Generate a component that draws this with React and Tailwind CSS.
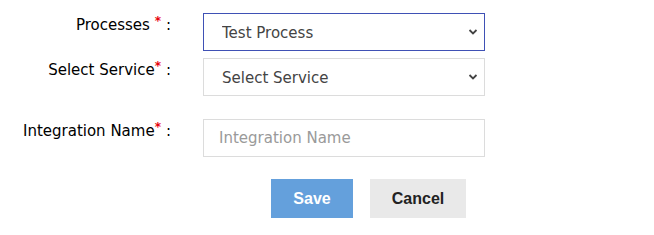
import React from 'react'

const Chevron = () => (
  <svg className="pointer-events-none absolute right-[7px] top-1/2 -translate-y-1/2" width="10" height="7" viewBox="0 0 10 7">
    <path d="M1.5 1.5 L5 5 L8.5 1.5" fill="none" stroke="#444" strokeWidth="1.8" />
  </svg>
)

const Label = ({ text, spaced }) => (
  <div className="w-[171px] shrink-0 text-right text-[15px] leading-[20px] text-black pt-[2px]">
    {text}
    {spaced ? ' ' : ''}
    <span className="text-red-600 align-top text-[12px] leading-[12px] font-bold">*</span>
    <span className="ml-[5px]">:</span>
  </div>
)

const SelectField = ({ value, options, active }) => (
  <div className="relative w-[282px]">
    <select
      defaultValue={value}
      className={`appearance-none w-full h-[38px] bg-white pl-[18px] pr-8 pt-[2px] text-[15px] text-[#444] outline-none ${
        active ? 'border border-[#3f51b5]' : 'border border-[#dcdcdc]'
      }`}
    >
      {options.map((o) => (
        <option key={o}>{o}</option>
      ))}
    </select>
    <Chevron />
  </div>
)

export default function App() {
  return (
    <div className="w-[654px] h-[235px] bg-white font-['DejaVu_Sans',sans-serif]">
      <div className="pt-[13px]">
        <div className="flex gap-[32px]">
          <Label text="Processes" spaced />
          <SelectField value="Test Process" options={['Test Process']} active />
        </div>
        <div className="flex gap-[32px] mt-[7px]">
          <Label text="Select Service" />
          <SelectField value="Select Service" options={['Select Service']} />
        </div>
        <div className="flex gap-[32px] mt-[23px]">
          <Label text="Integration Name" />
          <input
            placeholder="Integration Name"
            className="w-[282px] h-[38px] border border-[#dcdcdc] pl-[15px] text-[15px] text-[#444] placeholder:text-[#9a9a9a] outline-none"
          />
        </div>
        <div className="flex gap-[17px] mt-[22px] pl-[271px] font-['Liberation_Sans',Arial,sans-serif]">
          <button className="w-[82px] h-[39px] bg-[#64a0dc] text-white font-bold text-[16px]">Save</button>
          <button className="w-[96px] h-[39px] bg-[#e9e9e9] text-[#222] font-bold text-[16px]">Cancel</button>
        </div>
      </div>
    </div>
  )
}
